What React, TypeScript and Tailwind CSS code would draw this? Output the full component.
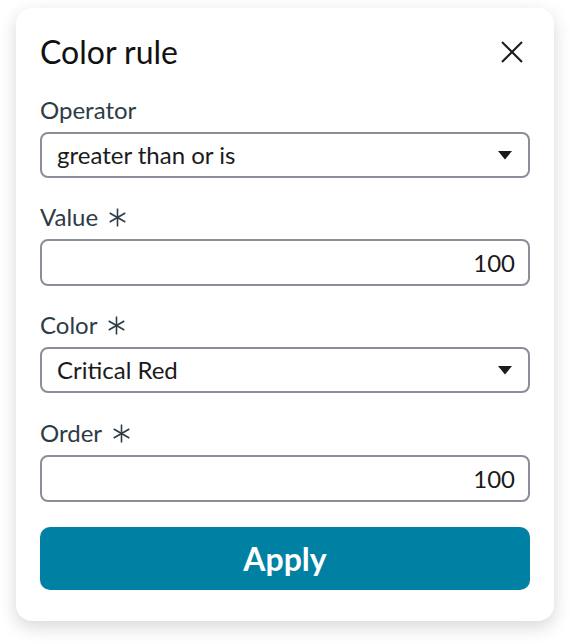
import React from "react";

const Asterisk = () => (
  <svg width="19" height="19" viewBox="0 0 18 18" className="ml-[10px] inline-block" aria-hidden>
    <g stroke="#2d3b45" strokeWidth="1.5" strokeLinecap="butt">
      <line x1="9" y1="0.5" x2="9" y2="17.5" />
      <line x1="1.6" y1="4.75" x2="16.4" y2="13.25" />
      <line x1="1.6" y1="13.25" x2="16.4" y2="4.75" />
    </g>
  </svg>
);

const Caret = () => (
  <svg width="14" height="9" viewBox="0 0 14 9" aria-hidden>
    <path d="M0 0 L14 0 L7 8.5 Z" fill="#1b1b1b" />
  </svg>
);

function Label({ text, required }: { text: string; required?: boolean }) {
  return (
    <div className="flex h-[28px] items-center text-[24px] leading-[28px] text-[#2d3b45]">
      <span>{text}</span>
      {required && <Asterisk />}
    </div>
  );
}

function SelectBox({ value }: { value: string }) {
  return (
    <div className="mt-[8px] flex h-[46px] items-center justify-between rounded-[8px] border-2 border-[#8b8e99] bg-white pl-[15px] pr-[16px] text-[24px] leading-[28px] text-[#1b1b1b]">
      <span>{value}</span>
      <Caret />
    </div>
  );
}

function InputBox({ value }: { value: string }) {
  return (
    <div className="mt-[8px] flex h-[47px] items-center justify-end rounded-[8px] border-2 border-[#8b8e99] bg-white px-[13px] text-[24px] leading-[28px] text-[#1b1b1b]">
      <span>{value}</span>
    </div>
  );
}

export default function App() {
  return (
    <div
      className="min-h-[644px] w-[570px] bg-white pl-[16px] pt-[8px]"
      style={{ fontFamily: "Lato, 'Noto Sans', sans-serif" }}
    >
      <div className="w-[538px] rounded-[16px] bg-white px-[24px] pb-[31px] pt-[24px] shadow-[0_6px_18px_rgba(0,0,0,0.16)]">
        <div className="flex h-[40px] items-center justify-between">
          <h1 className="text-[32px] font-normal leading-[40px] text-[#111]">Color rule</h1>
          <svg width="24" height="24" viewBox="0 0 24 24" className="mr-[6px]" aria-hidden>
            <g stroke="#1b1b1b" strokeWidth="2">
              <line x1="2" y1="2" x2="22" y2="22" />
              <line x1="22" y1="2" x2="2" y2="22" />
            </g>
          </svg>
        </div>

        <div className="mt-[24px]">
          <Label text="Operator" />
          <SelectBox value="greater than or is" />
        </div>
        <div className="mt-[25px]">
          <Label text="Value" required />
          <InputBox value="100" />
        </div>
        <div className="mt-[25px]">
          <Label text="Color" required />
          <SelectBox value="Critical Red" />
        </div>
        <div className="mt-[26px]">
          <Label text="Order" required />
          <InputBox value="100" />
        </div>

        <button className="mt-[25px] flex h-[63px] w-full items-center justify-center rounded-[10px] bg-[#0081a3] text-[32px] font-bold text-white">
          Apply
        </button>
      </div>
    </div>
  );
}
